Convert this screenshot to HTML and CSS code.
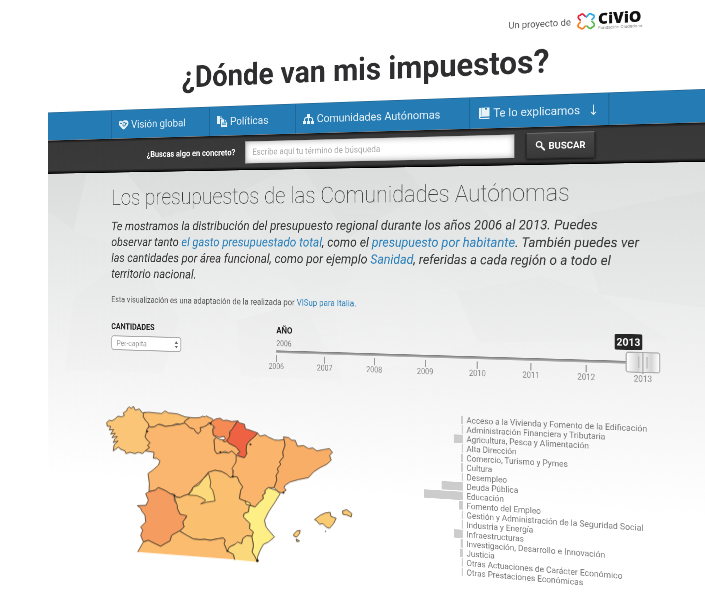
FILE: index.html
```html
<!DOCTYPE html>
<html lang="es">
<head>
<meta charset="utf-8">
<title>¿Dónde van mis impuestos?</title>
<link rel="stylesheet" href="styles.css">
</head>
<body>
<div class="scene">
<div class="page">
  <header class="masthead">
    <div class="brand">
      <span class="brand-intro">Un proyecto de</span>
      <svg class="brand-mark" viewBox="0 0 34 30" fill="none" stroke-width="3" stroke-linecap="round" stroke-linejoin="round" aria-hidden="true">
        <path stroke="#e4223c" d="M15.500 6.500L13 4C11 1.500 8 1.500 7 4C4 4 2.500 6 3 8C3.300 10 5 11 6.500 12.500"/>
        <path stroke="#27aae1" d="M17.500 7.500L21 4C23 1.500 26 1.500 27 4C30 4 31.500 6 31 8C30.700 10 29 11 27.500 12.500"/>
        <path stroke="#f58220" d="M6.500 16C5 18 3 19 2.500 21.500C2.500 24 4 25.500 7 26C8 28.500 11 28.500 13 26L15.500 23.500"/>
        <path stroke="#5cb947" d="M27.500 16C29 18 31 19 31.500 21.500C31.500 24 30 25.500 27 26C26 28.500 23 28.500 21 26L18.500 23.500"/>
      </svg>
      <span class="brand-name"><strong>CiViO</strong><small>Fundación Ciudadana</small></span>
    </div>
    <p class="site-title">¿Dónde van mis impuestos?</p>
  </header>

  <nav class="menu">
    <ul>
      <li><a href="#global">
        <svg class="icon" viewBox="0 0 24 24" aria-hidden="true"><path fill="currentColor" d="M1 9c0-4 4-6 8-3 3-3 9-3 12-1 3 3 2 6 0 9l-7 7c-2 1-4 0-5-1l-6-6C1 12 1 11 1 9z"/><path fill="none" stroke="#257bb3" stroke-width="1.800" d="M4 9l5 1M11 9c4-3 7 1 4 5-3 2-6 0-4-3M15 14l4-5"/></svg>
        Visión global</a></li>
      <li><a href="#politicas">
        <svg class="icon" viewBox="0 0 24 24" aria-hidden="true"><path fill="currentColor" d="M1 1h8l4 4v2H8v10H1zM9 8h8l6 5v10H9z"/><path fill="none" stroke="#257bb3" stroke-width="1.500" d="M9 1v4h4M17 8v5h6M12 15h8M12 18h8"/></svg>
        Políticas</a></li>
      <li><a href="#comunidades">
        <svg class="icon" viewBox="0 0 24 24" aria-hidden="true"><path fill="currentColor" d="M9 3h6v6H9zM1 16h6v6H1zM9 16h6v6H9zM17 16h6v6h-6z"/><path fill="none" stroke="currentColor" stroke-width="2" d="M12 8v9M4 17v-4c0-2 1-3 3-3h10c2 0 3 1 3 3v4"/></svg>
        Comunidades Autónomas</a></li>
      <li><a href="#explicamos">
        <svg class="icon" viewBox="0 0 24 24" aria-hidden="true"><path fill="currentColor" d="M4 2h18v16H5v2h17v2H5c-2 0-3-1-3-3V5c0-2 1-3 2-3z"/><path fill="#257bb3" d="M6 3h1v13H6zM14 3h3v3l-1.500-1L14 6z"/></svg>
        Te lo explicamos
        <svg class="arrow" viewBox="0 0 12 22" fill="none" stroke="currentColor" stroke-width="1.800" aria-hidden="true"><path d="M6 2v17M2 15l4 4 4-4"/></svg></a></li>
    </ul>
  </nav>

  <form class="search">
    <label for="q">¿Buscas algo en concreto?</label>
    <input id="q" type="text" placeholder="Escribe aquí tu término de búsqueda">
    <button type="button">
      <svg viewBox="0 0 20 20" fill="none" stroke="currentColor" aria-hidden="true"><circle cx="7.500" cy="7.500" r="5.500" stroke-width="2.600"/><path stroke-width="3.600" d="M12 12l7 7"/></svg>
      BUSCAR</button>
  </form>

  <main class="content">
    <svg class="facets" viewBox="0 0 1314 560" preserveAspectRatio="none" aria-hidden="true">
      <path fill="#000" fill-opacity=".012" d="M0 0H90L60 150L0 100zM180 0L260 120L420 60L520 0zM560 0L650 170L800 60L760 0zM1080 120L1120 300L1314 330V60z"/>
      <path fill="#fff" fill-opacity=".08" d="M90 0L60 150L190 210L260 120L180 0zM300 260L420 60L560 330L420 380zM620 330L700 190L860 300L900 420L640 520zM900 90L1080 120L1020 260z"/>
      <path fill="#000" fill-opacity=".008" d="M60 330L190 210L300 380L260 520H40zM420 380L560 330L640 520H430zM860 300L1020 260L1120 300L1240 400L900 420z"/>
    </svg>
    <h1>Los presupuestos de las Comunidades Autónomas</h1>
    <p class="lead">Te mostramos la distribución del presupuesto regional durante los años 2006 al 2013. Puedes observar tanto <a href="#total">el gasto presupuestado total</a>, como el <a href="#habitante">presupuesto por habitante</a>. También puedes ver las cantidades por área funcional, como por ejemplo <a href="#sanidad">Sanidad</a>, referidas a cada región o a todo el territorio nacional.</p>
    <p class="credit">Esta visualización es una adaptación de la realizada por <a href="#visup">VISup para Italia.</a></p>

    <div class="controls">
      <div class="amount">
        <label for="amount">CANTIDADES</label>
        <span class="picker">
          <select id="amount"><option>Per-capita</option></select>
          <svg viewBox="0 0 8 14" aria-hidden="true"><path fill="#666" d="M4 0l3.500 5h-7zM4 14l3.500-5h-7z"/></svg>
        </span>
      </div>
      <div class="year">
        <label for="year">AÑO</label>
        <span class="year-start">2006</span>
        <output class="year-value" for="year">2013</output>
        <input id="year" type="range" min="2006" max="2013" value="2013">
        <ol class="ticks"><li>2006</li><li>2007</li><li>2008</li><li>2009</li><li>2010</li><li>2011</li><li>2012</li><li>2013</li></ol>
      </div>
    </div>

    <div class="results">
      <svg class="map" viewBox="30 30 780 495" role="img" aria-label="Mapa de las Comunidades Autónomas">
        <g stroke="#4a3a26" stroke-width="2.400" stroke-linejoin="round">
          <path fill="#fab66e" d="M178 110L192 110 205 102 225 108 245 106 270 102 283 98 292 104 298 112 312 116 318 126 325 130 332 122 330 112 340 110 352 104 362 98 372 105 368 118 370 135 380 142 372 148 374 180 380 190 392 186 415 188 425 182 440 196 440 210 435 225 428 240 430 258 420 262 410 252 395 244 375 240 355 246 350 258 335 270 325 285 310 290 305 302 295 312 282 316 270 322 258 320 253 312 240 310 228 302 215 296 205 292 195 300 177 304 178 280 174 250 190 238 205 225 210 212 200 204 190 204 192 186 165 182 178 172 172 165 180 158 172 150 165 140 170 118z"/>
          <path fill="#fbc577" d="M50 97L58 90 66 92 75 86 84 78 95 80 103 76 100 68 110 62 112 55 118 50 124 55 130 48 136 60 148 56 155 66 160 68 166 66 160 80 168 92 175 100 177 108 170 118 168 130 165 140 172 150 180 158 172 165 178 172 165 182 158 190 145 186 135 190 120 186 108 190 105 182 90 176 86 170 70 182 72 165 84 152 70 157 74 147 82 139 66 142 76 129 62 132 71 118 58 119 62 108 52 108z"/>
          <path fill="#fbbf70" d="M160 68L175 66 195 68 215 70 225 62 235 68 262 71 285 80 300 82 285 92 283 98 270 102 260 100 245 106 225 108 215 103 205 102 192 110 178 110 175 100 168 92 160 80z"/>
          <path fill="#fab46c" d="M300 82L315 83 330 82 337 78 345 80 348 77 358 82 367 86 370 92 362 98 355 98 352 104 340 110 330 112 332 122 325 130 318 126 312 116 298 112 292 104 283 98 285 92z"/>
          <path fill="#fbbf70" d="M355 246L375 240 395 244 410 252 420 262 430 258 442 260 448 275 458 290 452 300 448 325 465 332 478 345 475 365 462 370 460 380 470 390 480 400 478 415 490 425 488 438 470 436 458 445 455 460 435 462 418 470 412 485 408 475 402 460 405 450 400 443 385 445 360 450 345 447 330 448 310 446 290 435 270 422 282 410 278 395 290 380 270 372 262 355 258 335 253 320 270 322 282 316 295 312 310 290 335 270z"/>
          <path fill="#fcd97a" d="M355 247L350 256 340 265 325 285 310 290 305 302 295 314 320 316 335 322 347 330 340 336 332 341 348 336 375 332 372 315 368 300 360 290 362 275z"/>
          <path fill="#fab46c" d="M372 148L380 142 390 148 410 150 415 158 438 170 450 185 442 190 440 196 425 182 415 188 405 183 392 188 380 190 374 180z"/>
          <path fill="#f58a55" d="M368 92L378 86 390 84 400 91 410 90 425 94 443 92 435 102 428 115 418 125 420 135 414 150 405 155 398 152 406 146 402 138 388 142 380 138 370 135 368 118 375 112 368 105 360 102 362 96z"/>
          <path fill="#fab46c" d="M502 128L510 138 525 134 535 141 545 145 552 149 565 150 582 148 585 165 578 185 580 200 568 215 572 222 562 235 565 245 558 255 560 270 552 292 535 292 525 300 525 310 518 314 520 325 508 335 495 350 480 345 465 332 448 325 452 300 458 290 448 275 442 260 428 258 430 240 425 236 438 215 438 196 448 198 463 202 470 190 468 178 470 162 480 150 495 138z"/>
          <path fill="#ee6243" d="M443 92L448 98 463 102 466 116 480 120 502 128 495 138 480 150 470 162 468 178 470 190 463 202 448 198 442 190 450 185 438 170 415 158 410 150 418 140 420 125 430 112z"/>
          <path fill="#f9ae67" d="M580 140L595 142 605 150 615 150 622 168 640 166 655 175 668 173 680 182 700 178 718 175 727 187 718 195 723 210 710 222 690 232 670 245 655 262 625 268 600 275 585 285 582 292 588 300 575 308 565 305 558 298 552 292 560 270 558 255 565 245 562 235 572 222 568 215 580 200 578 185 585 165 582 148z"/>
          <path fill="#fdee86" d="M535 292L552 298 558 300 570 310 555 335 535 365 523 390 528 410 540 425 553 440 535 455 520 462 510 480 502 500 502 515 495 500 486 485 490 465 485 440 490 425 478 415 480 400 470 390 460 380 462 370 475 365 478 345 495 350 508 335 520 325 518 314 525 310 525 300zM465 332L480 338 482 346 468 342z"/>
          <path fill="#f59c60" d="M177 304L195 300 205 292 215 296 228 302 240 310 253 315 253 330 262 345 262 355 270 372 290 376 285 385 278 395 282 410 268 422 245 435 240 452 225 460 212 468 195 460 175 450 160 455 152 435 158 420 152 410 167 395 165 375 155 362 152 354 142 346 168 345 175 330 167 310z"/>
          <path fill="#fbbc6f" d="M143 485L160 455 175 450 195 460 212 468 225 460 240 452 245 435 268 422 290 435 310 446 330 448 345 447 360 450 385 445 400 443 405 450 402 460 408 475 412 482 430 492 434 507"/>
          <path fill="#fcd87c" d="M434 508L430 492 412 482 418 470 435 462 442 455 455 460 458 445 470 436 485 438 490 465 486 485 495 500 502 515"/>
          <path fill="#fbcb74" d="M673 388L690 375 705 368 720 366 722 378 738 384 730 400 718 414 708 410 698 400 688 402 680 392zM757 362L770 358 785 370 783 380 770 374 758 372zM610 432L620 422 630 420 628 430 620 440 612 438zM618 446L628 452 620 454z"/>
        </g>
        <g fill="#2b2218"><circle cx="481" cy="163" r="3"/><circle cx="706" cy="423" r="2"/><circle cx="502" cy="511" r="4"/><circle cx="412" cy="482" r="3"/><circle cx="428" cy="259" r="3"/><circle cx="391" cy="186" r="3"/><circle cx="253" cy="316" r="3"/><circle cx="172" cy="124" r="3"/><circle cx="362" cy="99" r="3"/><circle cx="580" cy="307" r="3"/></g>
      </svg>
      <ul class="areas">
        <li><i style="width:3px"></i>Acceso a la Vivienda y Fomento de la Edificación</li>
        <li><i style="width:2px"></i>Administración Financiera y Tributaria</li>
        <li><i style="width:17px"></i>Agricultura, Pesca y Alimentación</li>
        <li><i style="width:2px"></i>Alta Dirección</li>
        <li><i style="width:3px"></i>Comercio, Turismo y Pymes</li>
        <li><i style="width:3px"></i>Cultura</li>
        <li><i style="width:2px"></i>Desempleo</li>
        <li><i style="width:40px"></i>Deuda Pública</li>
        <li><i style="width:74px"></i>Educación</li>
        <li><i style="width:7px"></i>Fomento del Empleo</li>
        <li><i style="width:2px"></i>Gestión y Administración de la Seguridad Social</li>
        <li><i style="width:2px"></i>Industria y Energía</li>
        <li><i style="width:16px"></i>Infraestructuras</li>
        <li><i style="width:4px"></i>Investigación, Desarrollo e Innovación</li>
        <li><i style="width:5px"></i>Justicia</li>
        <li><i style="width:2px"></i>Otras Actuaciones de Carácter Económico</li>
        <li><i style="width:2px"></i>Otras Prestaciones Económicas</li>
      </ul>
    </div>
  </main>
</div>
</div>
</body>
</html>
```
FILE: styles.css
```css
* { box-sizing: border-box; }

body {
  margin: 0;
  background: #fff;
  color: #333;
  font-family: Roboto, "Open Sans", sans-serif;
}

a { color: #2a80bb; text-decoration: none; }

/* The page hangs from its left edge and swings towards the reader. */
.scene {
  height: 100vh;
  padding-left: 48px;
  overflow: hidden;
  perspective: 2170px;
  perspective-origin: 48px 238px;
}

.page {
  width: 200%;
  transform-origin: 0 0;
  transform: rotateY(-31.7deg) scale3d(.5, .5, .5);
  transform-style: preserve-3d;
}

/* Masthead */
.masthead { height: 225px; padding-top: 80px; }
.brand {
  display: flex;
  justify-content: flex-end;
  align-items: center;
  gap: 4px;
  height: 40px;
  padding-right: 118px;
}
.brand-intro { margin-right: 6px; font-size: 17px; color: #555; }
.brand-mark { width: 34px; height: 30px; }
.brand-name { display: flex; flex-direction: column; width: 78px; color: #111; }
.brand-name strong { font: 800 27px/24px "Open Sans", sans-serif; }
.brand-name small { font-size: 8px; line-height: 9px; color: #888; }
.site-title {
  margin: 12px 0 0;
  padding-left: 20px;
  font-size: 58px;
  line-height: 68px;
  font-weight: 700;
  text-align: center;
  color: #2e2e30;
}

/* Menu */
.menu {
  height: 56px;
  padding-left: 146px;
  background: #257bb3;
  border-top: 1px solid #1b5c88;
}
.menu ul {
  display: grid;
  grid-template-columns: 216px 180px 342px 254px;
  height: 100%;
  margin: 0;
  padding: 0;
  list-style: none;
}
.menu li { border-left: 2px solid #1d6698; }
.menu li:last-child { border-right: 2px solid #1d6698; }
.menu a {
  display: flex;
  align-items: center;
  gap: 5px;
  height: 100%;
  padding: 0 20px 0 14px;
  color: #e6f1f8;
  font-size: 21px;
}
.icon { width: 24px; height: 24px; }
.arrow { width: 12px; height: 22px; margin-left: auto; }

/* Search */
.search {
  display: flex;
  align-items: center;
  gap: 21px;
  height: 67px;
  padding-left: 220px;
  background: linear-gradient(#111, #383838 6px, #3a3a3a 60px, #111);
  border-bottom: 2px solid #000;
}
.search label {
  width: 198px;
  font-size: 16px;
  font-weight: 700;
  white-space: nowrap;
  text-align: right;
  color: #fff;
}
.search input {
  width: 529px;
  height: 42px;
  padding: 0 14px;
  border: 1px solid #aaa;
  background: #fff;
  box-shadow: inset 0 0 12px #aaa;
  font: 16px Roboto, sans-serif;
}
.search input::placeholder { color: #aaa; }
.search button {
  display: flex;
  align-items: center;
  justify-content: center;
  gap: 6px;
  width: 124px;
  height: 46px;
  border: 2px solid #2c2c2c;
  border-top-color: #666;
  border-radius: 3px;
  background: linear-gradient(#484848, #383838);
  box-shadow: 0 2px 4px #111;
  color: #fff;
  font: 700 17px Roboto, sans-serif;
}
.search svg { width: 18px; height: 18px; }

/* Content */
.content {
  position: relative;
  padding: 23px 88px 40px 146px;
  background: linear-gradient(#dedfdf, #e8e9e9 180px, #f2f2f2 350px, #fff 600px);
  transform-style: preserve-3d;
}
.facets { position: absolute; top: 0; left: 0; width: 100%; height: 420px; }
h1 {
  position: relative;
  margin: 0;
  font-size: 42px;
  line-height: 52px;
  font-weight: 100;
  color: #333;
}
.lead {
  position: relative;
  max-width: 1058px;
  margin: 15px 0 0;
  font-size: 24px;
  line-height: 31px;
  font-style: italic;
}
.credit {
  position: relative;
  margin: 25px 0 0;
  font-size: 16px;
  line-height: 20px;
  color: #555;
}

/* Controls */
.controls {
  position: relative;
  display: flex;
  justify-content: space-between;
  margin-top: 33px;
}
.controls label {
  display: block;
  font-size: 16px;
  line-height: 20px;
  font-weight: 700;
  color: #222;
}
.picker { position: relative; display: block; width: 156px; margin-top: 7px; }
.picker svg { position: absolute; top: 8px; right: 7px; width: 8px; height: 14px; }
.picker select {
  display: block;
  width: 100%;
  height: 29px;
  padding: 0 10px;
  appearance: none;
  border: 2px solid #aaa;
  border-radius: 6px;
  background: #fff;
  color: #999;
  font: 15px Roboto, sans-serif;
}
.year { position: relative; width: 752px; }
.year label, .year-start { padding-left: 30px; }
.year-start { display: block; margin-top: 6px; font-size: 14px; line-height: 16px; color: #777; }
.year-value {
  position: absolute;
  top: 1px;
  right: 31px;
  width: 48px;
  border-radius: 3px;
  background: #262626;
  color: #fff;
  font-size: 18px;
  line-height: 27px;
  font-weight: 700;
  text-align: center;
}
.year input {
  display: block;
  position: relative;
  z-index: 1;
  width: 100%;
  height: 36px;
  margin: -11px 0 0;
  appearance: none;
  background: linear-gradient(#777, #bbb) center / calc(100% - 60px) 5px no-repeat;
}
.year input::-webkit-slider-thumb {
  appearance: none;
  width: 60px;
  height: 36px;
  border: 2px solid #aaa;
  border-radius: 5px;
  background:
    linear-gradient(#bbb, #bbb) 20px center / 2px 20px no-repeat,
    linear-gradient(#aaa, #aaa) center / 2px 34px no-repeat,
    linear-gradient(#bbb, #bbb) 34px center / 2px 20px no-repeat,
    linear-gradient(90deg, #fff, #d4d4d4 35%, #f2f2f2 50%, #d4d4d4 75%, #fff);
}
.ticks {
  display: flex;
  justify-content: space-between;
  margin: -11px 10px 0;
  padding: 0;
  list-style: none;
  font-size: 14px;
  line-height: 16px;
  color: #888;
}
.ticks li { width: 40px; text-align: center; }
.ticks li::before {
  content: "";
  display: block;
  width: 2px;
  height: 13px;
  margin: 0 auto;
  background: #999;
}

/* Results */
.results {
  display: grid;
  grid-template-columns: 3fr 2fr;
  align-items: start;
  margin-top: 69px;
  transform-style: preserve-3d;
}
/* The map stands upright on its right edge, facing the reader. */
.map {
  width: 478px;
  margin: -20px 0 0 50px;
  transform-origin: 100% 0;
  transform: rotateY(31.7deg);
}
.areas {
  margin: 0;
  padding: 0;
  list-style: none;
  font-size: 15px;
  line-height: 17px;
  white-space: nowrap;
  color: #777;
}
.areas li {
  display: grid;
  grid-template-columns: 78px 1fr;
  column-gap: 7px;
}
.areas i { justify-self: end; height: 15px; background: #ccc; }
```
